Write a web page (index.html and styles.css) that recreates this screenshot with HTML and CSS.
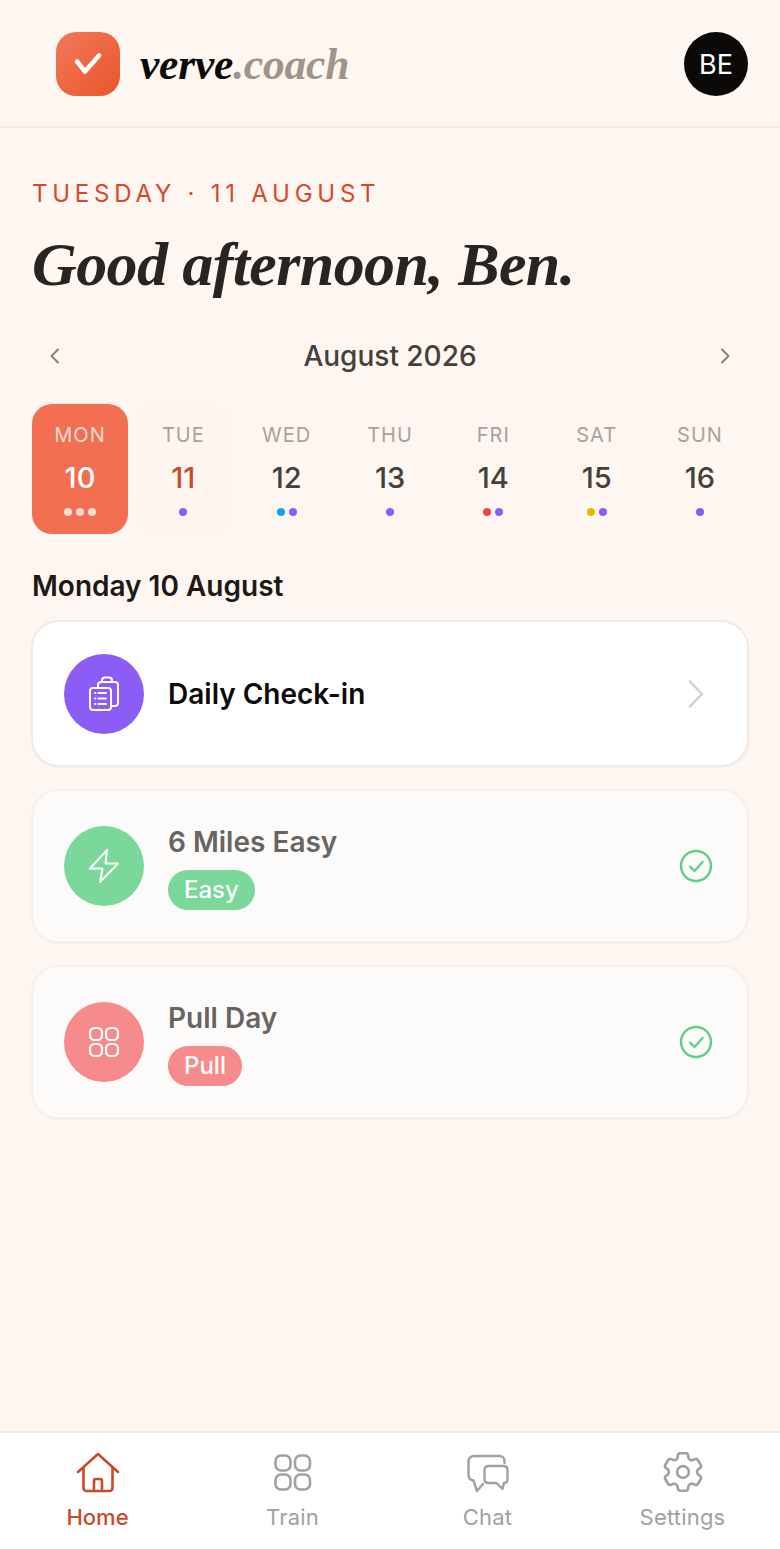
FILE: index.html
```html
<!DOCTYPE html>
<html lang="en">
<head>
    <meta charset="UTF-8">
    <meta name="viewport" content="width=device-width, initial-scale=1.0">
    <title>verve.coach</title>
    <link rel="stylesheet" href="styles.css">
</head>
<body>
    <div class="app">
        <header class="topbar">
            <div class="brand">
                <div class="brand-mark">
                    <svg width="32" height="32" viewBox="0 0 32 32" fill="none" stroke="#fff" stroke-width="4.500" stroke-linecap="round" stroke-linejoin="round"><path d="M5 13.500l8 10L27 7.500"/></svg>
                </div>
                <div class="brand-name">verve<span>.coach</span></div>
            </div>
            <div class="avatar">BE</div>
        </header>

        <main class="content">
            <div class="eyebrow">TUESDAY · 11 AUGUST</div>
            <h1 class="greeting">Good afternoon, Ben.</h1>

            <div class="month-nav">
                <svg width="20" height="20" viewBox="0 0 20 20" fill="none" stroke="#8a827b" stroke-width="2" stroke-linecap="round" stroke-linejoin="round"><path d="M13 3.500L6.500 10l6.500 6.500"/></svg>
                <div class="month-label">August 2026</div>
                <svg width="20" height="20" viewBox="0 0 20 20" fill="none" stroke="#8a827b" stroke-width="2" stroke-linecap="round" stroke-linejoin="round"><path d="M7 3.500l6.500 6.500L7 16.500"/></svg>
            </div>

            <div class="week">
                <div class="day selected">
                    <div class="day-name">MON</div>
                    <div class="day-num">10</div>
                    <div class="dots"><i class="dot white"></i><i class="dot white"></i><i class="dot white"></i></div>
                </div>
                <div class="day today">
                    <div class="day-name">TUE</div>
                    <div class="day-num">11</div>
                    <div class="dots"><i class="dot purple"></i></div>
                </div>
                <div class="day">
                    <div class="day-name">WED</div>
                    <div class="day-num">12</div>
                    <div class="dots"><i class="dot blue"></i><i class="dot purple"></i></div>
                </div>
                <div class="day">
                    <div class="day-name">THU</div>
                    <div class="day-num">13</div>
                    <div class="dots"><i class="dot purple"></i></div>
                </div>
                <div class="day">
                    <div class="day-name">FRI</div>
                    <div class="day-num">14</div>
                    <div class="dots"><i class="dot red"></i><i class="dot purple"></i></div>
                </div>
                <div class="day">
                    <div class="day-name">SAT</div>
                    <div class="day-num">15</div>
                    <div class="dots"><i class="dot amber"></i><i class="dot purple"></i></div>
                </div>
                <div class="day">
                    <div class="day-name">SUN</div>
                    <div class="day-num">16</div>
                    <div class="dots"><i class="dot purple"></i></div>
                </div>
            </div>

            <h2 class="day-title">Monday 10 August</h2>

            <div class="cards">
                <div class="card checkin">
                    <div class="card-icon bg-purple">
                        <svg width="36" height="36" viewBox="0 0 36 36" fill="none" stroke="#fff" stroke-width="2" stroke-linecap="round" stroke-linejoin="round">
                            <path d="M12 12V9a3 3 0 0 1 3-3h1M16 6V4.500a3 3 0 0 1 3-3h4a3 3 0 0 1 3 3V6M16 6h10M26 6h3a3 3 0 0 1 3 3v18a3 3 0 0 1-3 3h-4"/>
                            <rect x="4" y="12" width="21" height="22" rx="3"/>
                            <path d="M9 17h.5M12.500 17H20M9 22.500h.5M12.500 22.500H20M9 28h.5M12.500 28H20"/>
                        </svg>
                    </div>
                    <div class="card-body">
                        <div class="card-title">Daily Check-in</div>
                    </div>
                    <svg class="card-end" width="32" height="32" viewBox="0 0 32 32" fill="none" stroke="#d2cecb" stroke-width="2.500" stroke-linecap="round" stroke-linejoin="round"><path d="M11 3.500L23 16 11 28.500"/></svg>
                </div>

                <div class="card done">
                    <div class="card-icon bg-green">
                        <svg width="32" height="36" viewBox="0 0 32 36" fill="none" stroke="#fff" stroke-width="2" stroke-linecap="round" stroke-linejoin="round"><path d="M19 2L2 20.500h12.500L12 34l18-18.500H17.500L19 2z"/></svg>
                    </div>
                    <div class="card-body">
                        <div class="card-title">6 Miles Easy</div>
                        <span class="tag bg-green">Easy</span>
                    </div>
                    <svg class="card-end" width="36" height="36" viewBox="0 0 36 36" fill="none" stroke="#5fcf8b" stroke-width="2.400" stroke-linecap="round" stroke-linejoin="round"><circle cx="18" cy="18" r="15"/><path d="M12 18.500l4.500 4.500 8-9"/></svg>
                </div>

                <div class="card done">
                    <div class="card-icon bg-red">
                        <svg width="32" height="32" viewBox="0 0 32 32" fill="none" stroke="#fff" stroke-width="2.200"><rect x="2" y="2" width="12" height="12" rx="4.500"/><rect x="18" y="2" width="12" height="12" rx="4.500"/><rect x="2" y="18" width="12" height="12" rx="4.500"/><rect x="18" y="18" width="12" height="12" rx="4.500"/></svg>
                    </div>
                    <div class="card-body">
                        <div class="card-title">Pull Day</div>
                        <span class="tag bg-red">Pull</span>
                    </div>
                    <svg class="card-end" width="36" height="36" viewBox="0 0 36 36" fill="none" stroke="#5fcf8b" stroke-width="2.400" stroke-linecap="round" stroke-linejoin="round"><circle cx="18" cy="18" r="15"/><path d="M12 18.500l4.500 4.500 8-9"/></svg>
                </div>
            </div>
        </main>

        <nav class="tabbar">
            <div class="tab active">
                <svg width="44" height="42" viewBox="0 0 44 42" fill="none" stroke="currentColor" stroke-width="2.600" stroke-linecap="round" stroke-linejoin="round">
                    <path d="M2 20L22 2l20 18"/>
                    <path d="M7.500 16v20a3 3 0 0 0 3 3h23a3 3 0 0 0 3-3V16"/>
                    <path d="M18 39V29a2 2 0 0 1 2-2h4a2 2 0 0 1 2 2v10"/>
                </svg>
                <span>Home</span>
            </div>
            <div class="tab">
                <svg width="44" height="42" viewBox="0 0 44 42" fill="none" stroke="currentColor" stroke-width="2.600"><rect x="4.500" y="3.500" width="15" height="15" rx="5.500"/><rect x="24" y="3.500" width="15" height="15" rx="5.500"/><rect x="4.500" y="22.500" width="15" height="15" rx="5.500"/><rect x="24" y="22.500" width="15" height="15" rx="5.500"/></svg>
                <span>Train</span>
            </div>
            <div class="tab">
                <svg width="44" height="42" viewBox="0 0 44 42" fill="none" stroke="currentColor" stroke-width="2.400" stroke-linecap="round" stroke-linejoin="round">
                    <path d="M38.500 11V9c0-3-2-5-5-5H8C5 4 2.500 6 2.500 9v14c0 3 1.500 5 5 5.500L11 39l6-7"/>
                    <path d="M22.500 14h15c2.500 0 4 1.500 4 4v9c0 2.500-1.500 4-3.500 4l-1.500 6-6-6h-8c-2.500 0-4-1.500-4-4v-9c0-2.500 1.500-4 4-4z"/>
                </svg>
                <span>Chat</span>
            </div>
            <div class="tab">
                <svg width="44" height="42" viewBox="1.500 2.500 21 20" fill="none" stroke="currentColor" stroke-width="1.250" stroke-linecap="round" stroke-linejoin="round">
                    <path d="M9.594 3.940c.09-.542.56-.94 1.110-.94h2.593c.55 0 1.020.398 1.110.94l.213 1.281c.063.374.313.686.645.870.074.040.147.083.22.127.325.196.72.257 1.075.124l1.217-.456a1.125 1.125 0 0 1 1.370.49l1.296 2.247a1.125 1.125 0 0 1-.26 1.431l-1.003.827c-.293.241-.438.613-.43.992a7.723 7.723 0 0 1 0 .255c-.008.378.137.75.43.991l1.004.827c.424.35.534.955.26 1.430l-1.298 2.247a1.125 1.125 0 0 1-1.369.491l-1.217-.456c-.355-.133-.75-.072-1.076.124a6.470 6.470 0 0 1-.22.128c-.331.183-.581.495-.644.869l-.213 1.281c-.09.543-.56.94-1.110.94h-2.594c-.55 0-1.019-.398-1.110-.94l-.213-1.281c-.062-.374-.312-.686-.644-.870a6.520 6.520 0 0 1-.22-.127c-.325-.196-.72-.257-1.076-.124l-1.217.456a1.125 1.125 0 0 1-1.369-.49l-1.297-2.247a1.125 1.125 0 0 1 .26-1.431l1.004-.827c.292-.24.437-.613.43-.991a6.932 6.932 0 0 1 0-.255c.007-.38-.138-.751-.43-.992l-1.004-.827a1.125 1.125 0 0 1-.26-1.430l1.297-2.247a1.125 1.125 0 0 1 1.370-.491l1.216.456c.356.133.751.072 1.076-.124.072-.044.146-.086.22-.128.332-.183.582-.495.644-.869l.214-1.280z"/>
                    <circle cx="12" cy="12" r="2.800"/>
                </svg>
                <span>Settings</span>
            </div>
        </nav>
    </div>
</body>
</html>
```

FILE: styles.css
```css
* {
    box-sizing: border-box;
    margin: 0;
    padding: 0;
}

body {
    font-family: Inter, "Liberation Sans", sans-serif;
    background-color: #fef6f0;
    color: #1c1917;
}

.app {
    display: flex;
    flex-direction: column;
    width: 780px;
    height: 1549px;
}

.topbar {
    display: flex;
    justify-content: space-between;
    align-items: center;
    height: 128px;
    padding: 2px 32px 0 56px;
    border-bottom: 2px solid #f1ece8;
}

.brand {
    display: flex;
    align-items: center;
    gap: 20px;
}

.brand-mark {
    display: flex;
    justify-content: center;
    align-items: center;
    width: 64px;
    height: 64px;
    border-radius: 20px;
    background: linear-gradient(135deg, #f2795a, #e8562a);
}

.brand-name {
    font-family: "Liberation Serif", serif;
    font-style: italic;
    font-weight: 700;
    font-size: 43.500px;
    letter-spacing: -0.2px;
    color: #0c0a09;
}

.brand-name span {
    color: #a0948a;
}

.avatar {
    display: flex;
    justify-content: center;
    align-items: center;
    width: 64px;
    height: 64px;
    border-radius: 50%;
    background-color: #0c0a09;
    color: #fff;
    font-size: 27px;
    font-weight: 400;
}

.content {
    flex: 1;
    padding: 52px 32px 0;
}

.eyebrow {
    font-size: 24px;
    line-height: 28px;
    letter-spacing: 4.750px;
    color: #d9482a;
}

.greeting {
    margin-top: 20px;
    font-family: "Liberation Serif", serif;
    font-style: italic;
    font-weight: 700;
    font-size: 62px;
    line-height: 72px;
    letter-spacing: -0.6px;
    color: #292420;
}

.month-nav {
    display: flex;
    justify-content: space-between;
    align-items: center;
    margin-top: 36px;
    padding: 0 13px;
    height: 40px;
}

.month-label {
    font-size: 28px;
    font-weight: 500;
    color: #44403c;
}

.week {
    display: grid;
    grid-template-columns: repeat(7, 1fr);
    gap: 7.330px;
    margin-top: 28px;
}

.day {
    display: flex;
    flex-direction: column;
    align-items: center;
    height: 130px;
    padding-top: 20px;
    border-radius: 20px;
}

.day-name {
    font-size: 20px;
    line-height: 22px;
    letter-spacing: 1px;
    color: #a8a29e;
}

.day-num {
    margin-top: 12px;
    font-size: 29px;
    line-height: 40px;
    font-weight: 500;
    color: #44403c;
}

.dots {
    display: flex;
    justify-content: center;
    gap: 4px;
    margin-top: 10px;
}

.dot {
    display: block;
    width: 8px;
    height: 8px;
    border-radius: 50%;
}

.dot.white {
    background-color: rgba(255, 255, 255, 0.75);
}

.dot.purple {
    background-color: #8b5cf6;
}

.dot.blue {
    background-color: #0ea5e9;
}

.dot.red {
    background-color: #ef4444;
}

.dot.amber {
    background-color: #eab308;
}

.day.selected {
    background-color: #f26f52;
}

.day.selected .day-name {
    color: rgba(255, 255, 255, 0.75);
}

.day.selected .day-num {
    color: #fff;
}

.day.today {
    background-color: #fef5f0;
}

.day.today .day-num {
    color: #c9492c;
}

.day-title {
    margin-top: 34px;
    font-size: 28px;
    line-height: 36px;
    font-weight: 600;
    color: #1c1917;
}

.cards {
    display: flex;
    flex-direction: column;
    gap: 22px;
    margin-top: 16px;
}

.card {
    display: flex;
    align-items: center;
    gap: 24px;
    margin: 0 -1px;
    padding: 0 32px 0 31px;
    border: 2px solid #efeae6;
    border-radius: 28px;
    background-color: #fff;
    box-shadow: 0 1px 2px rgba(0, 0, 0, 0.03);
}

.card.checkin {
    height: 147px;
}

.card.done {
    height: 154px;
    background-color: #fdfbf9;
    border-color: #f5f0ec;
}

.card-icon {
    display: flex;
    flex-shrink: 0;
    justify-content: center;
    align-items: center;
    width: 80px;
    height: 80px;
    border-radius: 50%;
}

.bg-purple {
    background-color: #8b5cf6;
}

.bg-green {
    background-color: #79d89a;
}

.bg-red {
    background-color: #f78a8a;
}

.card-body {
    flex: 1;
}

.card.done .card-body {
    padding-top: 1px;
}

.card-title {
    font-size: 28px;
    line-height: 36px;
    font-weight: 600;
    color: #0c0a09;
}

.card.done .card-title {
    color: #686462;
}

.tag {
    display: inline-block;
    margin-top: 10px;
    padding: 0 16px;
    height: 40px;
    border-radius: 20px;
    color: #fff;
    font-size: 24px;
    line-height: 40px;
    font-weight: 550;
}

.card-end {
    flex-shrink: 0;
    margin-right: 1px;
}

.checkin .card-end {
    margin-right: 4px;
}

.tabbar {
    display: grid;
    grid-template-columns: repeat(4, 195px);
    height: 118px;
    border-top: 2px solid #ecebea;
    background-color: #fff;
}

.tab {
    display: flex;
    flex-direction: column;
    align-items: center;
    padding-top: 19px;
    color: #a3a09d;
    font-size: 22px;
    letter-spacing: 0.2px;
    line-height: 30px;
}

.tab span {
    margin-top: 8px;
}

.tab.active {
    color: #c9492c;
    font-weight: 500;
    letter-spacing: 0;
}
```
